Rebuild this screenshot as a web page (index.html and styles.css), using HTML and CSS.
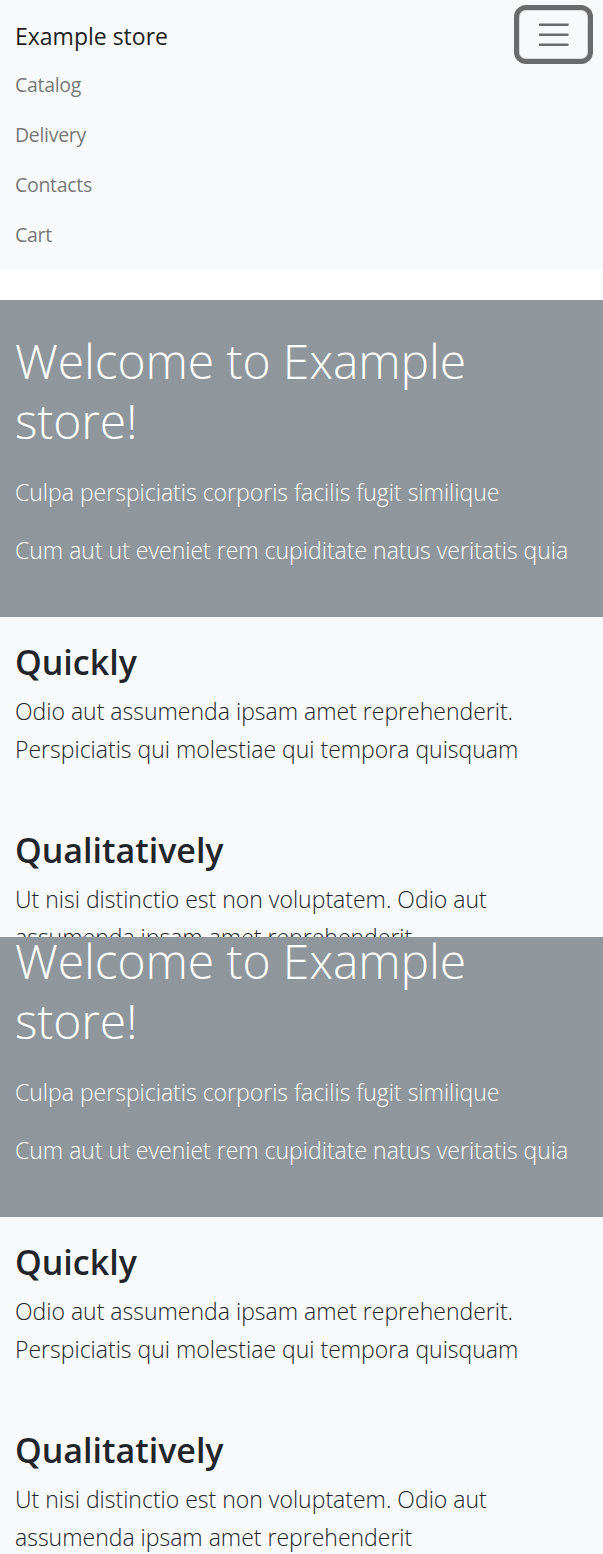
FILE: index.html
```html
<!DOCTYPE html>
<html lang="en">
<head>
<meta charset="utf-8">
<title>Example store</title>
<link rel="stylesheet" href="styles.css">
</head>
<body>
<nav class="navbar">
  <div class="navbar-top">
    <a class="brand" href="#">Example store</a>
    <button class="toggler" type="button" aria-label="Toggle navigation">
      <svg class="toggler-icon" viewBox="0 0 30 30" aria-hidden="true"><path d="M4 7h22M4 15h22M4 23h22"/></svg>
    </button>
  </div>
  <ul class="nav-links">
    <li><a href="#">Catalog</a></li>
    <li><a href="#">Delivery</a></li>
    <li><a href="#">Contacts</a></li>
    <li><a href="#">Cart</a></li>
  </ul>
</nav>

<section class="jumbotron">
  <h1 class="display">Welcome to Example store!</h1>
  <p class="lead">Culpa perspiciatis corporis facilis fugit similique</p>
  <p class="lead">Cum aut ut eveniet rem cupiditate natus veritatis quia</p>
</section>

<section class="features features-clipped">
  <div class="feature">
    <h2 class="feature-title">Quickly</h2>
    <p class="lead">Odio aut assumenda ipsam amet reprehenderit. Perspiciatis qui molestiae qui tempora quisquam</p>
  </div>
  <div class="feature">
    <h2 class="feature-title">Qualitatively</h2>
    <p class="lead">Ut nisi distinctio est non voluptatem. Odio aut assumenda ipsam amet reprehenderit</p>
  </div>
</section>

<section class="jumbotron jumbotron-clipped">
  <h1 class="display">Welcome to Example store!</h1>
  <p class="lead">Culpa perspiciatis corporis facilis fugit similique</p>
  <p class="lead">Cum aut ut eveniet rem cupiditate natus veritatis quia</p>
</section>

<section class="features">
  <div class="feature">
    <h2 class="feature-title">Quickly</h2>
    <p class="lead">Odio aut assumenda ipsam amet reprehenderit. Perspiciatis qui molestiae qui tempora quisquam</p>
  </div>
  <div class="feature">
    <h2 class="feature-title">Qualitatively</h2>
    <p class="lead">Ut nisi distinctio est non voluptatem. Odio aut assumenda ipsam amet reprehenderit</p>
  </div>
</section>
</body>
</html>
```

FILE: styles.css
```css
* {
  box-sizing: border-box;
}

html, body {
  margin: 0;
  padding: 0;
}

body {
  background: #ffffff;
  color: #212529;
  font-family: "Open Sans", "Noto Sans", sans-serif;
}

/* Navbar */
.navbar {
  background: #f8f9fa;
  padding: 10px 15px;
  margin-bottom: 30px;
}

.navbar-top {
  display: flex;
  justify-content: space-between;
  align-items: flex-start;
  height: 50px;
}

.brand {
  display: block;
  padding-top: 2px;
  font-size: 23px;
  line-height: 48px;
  color: rgba(0, 0, 0, 0.9);
  text-decoration: none;
  white-space: nowrap;
}

.toggler {
  display: flex;
  align-items: center;
  justify-content: center;
  width: 69px;
  height: 49px;
  padding: 0;
  background: transparent;
  border: 1px solid rgba(0, 0, 0, 0.12);
  border-radius: 7px;
  box-shadow: 0 0 0 5px rgba(0, 0, 0, 0.57);
  cursor: pointer;
}

.toggler-icon {
  width: 37.5px;
  height: 37.5px;
  fill: none;
  stroke: rgba(0, 0, 0, 0.57);
  stroke-width: 2;
  stroke-linecap: round;
  stroke-miterlimit: 10;
}

.nav-links {
  list-style: none;
  margin: 0;
  padding: 0;
}

.nav-links a {
  display: block;
  padding: 10px 0;
  font-size: 19.5px;
  line-height: 30px;
  letter-spacing: -0.3px;
  color: rgba(0, 0, 0, 0.55);
  text-decoration: none;
}

/* Jumbotron */
.jumbotron {
  display: flow-root;
  background: #90979c;
  color: #ffffff;
  padding: 31px 15px 28px;
}

.jumbotron-clipped {
  padding-top: 0;
}

.jumbotron-clipped .display {
  margin-top: -6px;
}

.display {
  margin: 0 0 23px;
  font-size: 48px;
  font-weight: 300;
  line-height: 60px;
  letter-spacing: -0.1px;
}

.lead {
  margin: 0 0 20px;
  font-size: 23px;
  font-weight: 300;
  line-height: 37.5px;
}

/* Features */
.features {
  background: #f8f9fa;
  color: #212529;
}

.features-clipped {
  height: 320px;
  overflow: hidden;
}

.feature {
  padding: 24px 15px 17px;
}

.feature-title {
  margin: 0 0 10px;
  font-size: 34px;
  font-weight: 600;
  line-height: 42px;
}
```
